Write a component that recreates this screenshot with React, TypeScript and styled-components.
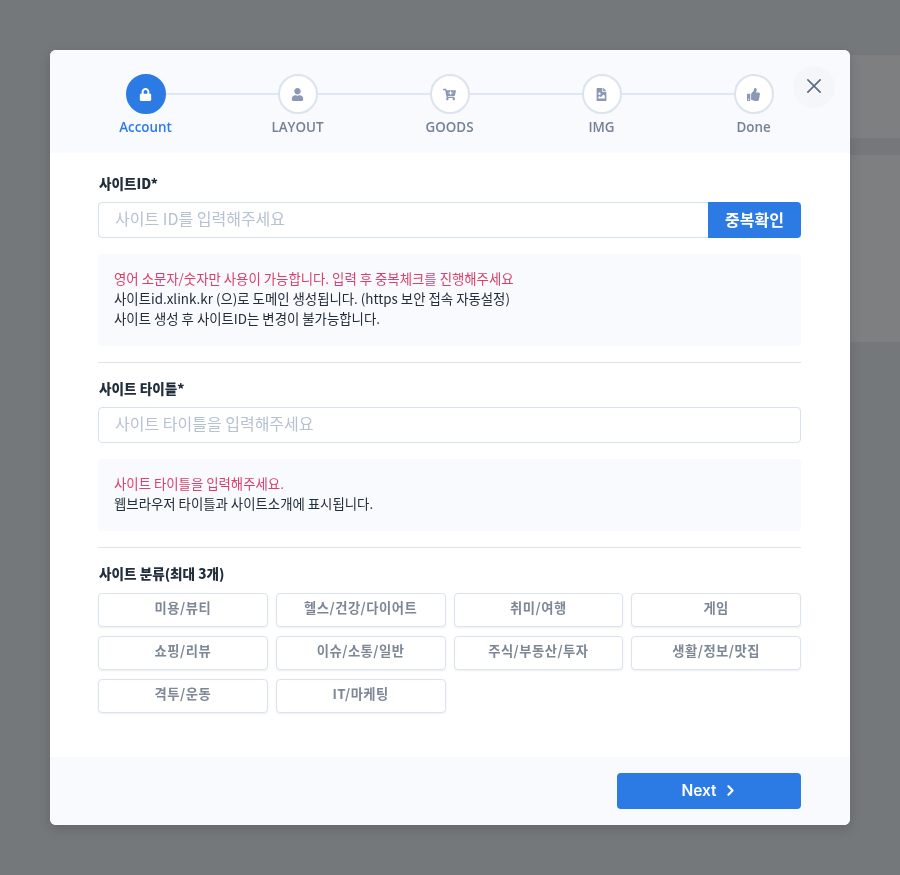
import { createGlobalStyle } from "styled-components";
import styled from "styled-components";
import { FaLock, FaUser, FaCartPlus, FaFileImage, FaThumbsUp } from "react-icons/fa";
import { FiChevronRight } from "react-icons/fi";
import { IoCloseOutline } from "react-icons/io5";

const GlobalStyle = createGlobalStyle`
  html, body {
    margin: 0;
    padding: 0;
    height: 100%;
    overflow: hidden;
    background: #75787b;
    font-family: "Noto Sans CJK KR", "Noto Sans", sans-serif;
  }
  * {
    box-sizing: border-box;
  }
`;

// Page behind the overlay
const Backdrop = styled.div`
  height: 875px;
  background: #75787b;
  padding: 55px 0 0 0;
  display: flex;
  flex-direction: column;
  gap: 17px;
`;

const BackCard = styled.div<{ $h: number }>`
  height: ${(p) => p.$h}px;
  margin-left: 60px;
  background: #7e7f80;
`;

const Overlay = styled.div`
  position: fixed;
  inset: 0;
  display: flex;
  justify-content: center;
  align-items: flex-start;
  padding-top: 50px;
`;

const Modal = styled.div`
  width: 800px;
  height: 775px;
  background: #fff;
  border-radius: 6px;
  overflow: hidden;
  display: flex;
  flex-direction: column;
  box-shadow: 0 4px 12px rgba(0, 0, 0, 0.15);
`;

const StepHeader = styled.div`
  position: relative;
  height: 103px;
  flex: none;
  background: #f9fafd;
  padding: 24px 76px 0;
`;

const StepRow = styled.div`
  display: flex;
  justify-content: space-between;
  width: 648px;
`;

const Step = styled.div`
  position: relative;
  width: 40px;
  display: flex;
  flex-direction: column;
  align-items: center;

  &:not(:last-child)::after {
    content: "";
    position: absolute;
    top: 19px;
    left: 40px;
    width: 112px;
    height: 2px;
    background: #dfe7f2;
  }
`;

const StepCircle = styled.div<{ $active?: boolean }>`
  width: 40px;
  height: 40px;
  border-radius: 50%;
  display: flex;
  align-items: center;
  justify-content: center;
  font-size: 13px;
  padding-right: 1px;
  background: ${(p) => (p.$active ? "#2c7be5" : "#fff")};
  border: 2px solid ${(p) => (p.$active ? "#2c7be5" : "#dbe3ee")};
  color: ${(p) => (p.$active ? "#fff" : "#8b99b3")};
`;

const StepLabel = styled.div<{ $active?: boolean }>`
  margin-top: 3px;
  margin-right: 1px;
  font-family: "Open Sans", "Noto Sans", sans-serif;
  font-size: 13.4px;
  line-height: 20px;
  font-weight: 600;
  white-space: nowrap;
  color: ${(p) => (p.$active ? "#2c7be5" : "#748194")};
`;

const CloseButton = styled.button`
  position: absolute;
  top: 16px;
  right: 15px;
  width: 42px;
  height: 42px;
  border: none;
  border-radius: 50%;
  background: #f5f6fa;
  color: #5e6e82;
  font-size: 28px;
  padding: 0 0 2px;
  display: flex;
  align-items: center;
  justify-content: center;
`;

const Body = styled.div`
  flex: 1;
  padding: 20px 49px 0 48px;
`;

const FieldLabel = styled.div`
  font-size: 13.6px;
  line-height: 20px;
  font-weight: 800;
  color: #232e3c;
  margin-bottom: 9px;
  padding-left: 1px;
`;

const InputRow = styled.div`
  display: flex;
  height: 36px;
`;

const TextInput = styled.input<{ $joined?: boolean }>`
  flex: 1;
  min-width: 0;
  height: 36px;
  padding: 0 16px 5px;
  font-family: inherit;
  font-size: 16px;
  color: #344050;
  background: #fff;
  border: 1px solid #d8e2ef;
  border-right: ${(p) => (p.$joined ? "none" : "1px solid #d8e2ef")};
  border-radius: ${(p) => (p.$joined ? "4px 0 0 4px" : "4px")};
  outline: none;

  &::placeholder {
    color: #b6c1d2;
    opacity: 1;
  }
`;

const CheckButton = styled.button`
  width: 93px;
  height: 36px;
  border: none;
  border-radius: 0 4px 4px 0;
  background: #2c7be5;
  color: #fff;
  font-family: inherit;
  font-size: 16px;
  font-weight: 700;
  padding: 0 0 3px;
`;

const HelpBox = styled.div`
  margin-top: 16px;
  padding: 14px 16px 18px;
  background: #f9fafd;
  border-radius: 4px;
  font-size: 13.4px;
  line-height: 20px;
  color: #232e3c;
`;

const HelpLine = styled.div<{ $warn?: boolean }>`
  color: ${(p) => (p.$warn ? "#d9416a" : "#232e3c")};
`;

const Divider = styled.hr`
  margin: 16px 0 15px;
  border: none;
  border-top: 1px solid #dfe3e8;
`;

const TagGrid = styled.div`
  display: grid;
  grid-template-columns: repeat(4, 1fr);
  column-gap: 8px;
  row-gap: 9px;
  margin-top: 10px;
`;

const Tag = styled.button`
  height: 34px;
  background: #fff;
  border: 1px solid #dde3ee;
  border-radius: 4px;
  box-shadow: 0 1px 2px rgba(43, 45, 80, 0.08);
  color: #7d8795;
  font-family: inherit;
  font-size: 13.3px;
  letter-spacing: 0.5px;
  font-weight: 600;
  padding: 0 0 5px;
`;

const Footer = styled.div`
  height: 68px;
  flex: none;
  background: #f9fafd;
  padding: 16px 49px 0 0;
  display: flex;
  justify-content: flex-end;
  align-items: flex-start;
`;

const NextButton = styled.button`
  width: 184px;
  height: 36px;
  border: none;
  border-radius: 4px;
  background: #2c7be5;
  color: #fff;
  font-family: "Inter", "Noto Sans", sans-serif;
  font-size: 15.5px;
  font-weight: 600;
  display: flex;
  align-items: center;
  justify-content: center;
  gap: 5px;
  padding: 0 0 2px 2px;

  svg {
    font-size: 17px;
    stroke-width: 3;
  }
`;

const steps = [
  { label: "Account", icon: <FaLock /> },
  { label: "LAYOUT", icon: <FaUser /> },
  { label: "GOODS", icon: <FaCartPlus /> },
  { label: "IMG", icon: <FaFileImage /> },
  { label: "Done", icon: <FaThumbsUp /> },
];

const categories = [
  "미용/뷰티",
  "헬스/건강/다이어트",
  "취미/여행",
  "게임",
  "쇼핑/리뷰",
  "이슈/소통/일반",
  "주식/부동산/투자",
  "생활/정보/맛집",
  "격투/운동",
  "IT/마케팅",
];

export default function App() {
  return (
    <>
      <GlobalStyle />
      <Backdrop>
        <BackCard $h={83} />
        <BackCard $h={187} />
      </Backdrop>
      <Overlay>
        <Modal>
          <StepHeader>
            <StepRow>
              {steps.map((step, i) => (
                <Step key={step.label}>
                  <StepCircle $active={i === 0}>{step.icon}</StepCircle>
                  <StepLabel $active={i === 0}>{step.label}</StepLabel>
                </Step>
              ))}
            </StepRow>
            <CloseButton aria-label="close">
              <IoCloseOutline />
            </CloseButton>
          </StepHeader>

          <Body>
            <FieldLabel>사이트ID*</FieldLabel>
            <InputRow>
              <TextInput $joined placeholder="사이트 ID를 입력해주세요" />
              <CheckButton>중복확인</CheckButton>
            </InputRow>
            <HelpBox>
              <HelpLine $warn>영어 소문자/숫자만 사용이 가능합니다. 입력 후 중복체크를 진행해주세요</HelpLine>
              <HelpLine>사이트id.xlink.kr (으)로 도메인 생성됩니다. (https 보안 접속 자동설정)</HelpLine>
              <HelpLine>사이트 생성 후 사이트ID는 변경이 불가능합니다.</HelpLine>
            </HelpBox>
            <Divider />

            <FieldLabel>사이트 타이틀*</FieldLabel>
            <InputRow>
              <TextInput placeholder="사이트 타이틀을 입력해주세요" />
            </InputRow>
            <HelpBox>
              <HelpLine $warn>사이트 타이틀을 입력해주세요.</HelpLine>
              <HelpLine>웹브라우저 타이틀과 사이트소개에 표시됩니다.</HelpLine>
            </HelpBox>
            <Divider />

            <FieldLabel>사이트 분류(최대 3개)</FieldLabel>
            <TagGrid>
              {categories.map((name) => (
                <Tag key={name}>{name}</Tag>
              ))}
            </TagGrid>
          </Body>

          <Footer>
            <NextButton>
              Next
              <FiChevronRight />
            </NextButton>
          </Footer>
        </Modal>
      </Overlay>
    </>
  );
}
